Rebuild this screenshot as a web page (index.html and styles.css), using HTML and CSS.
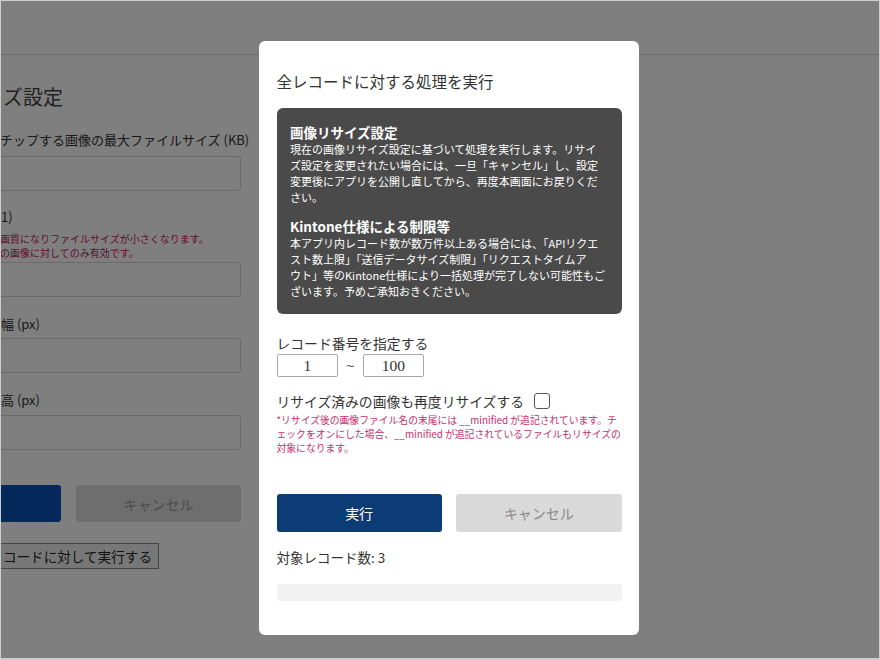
FILE: index.html
```html
<!DOCTYPE html>
<html lang="ja">
<head>
<meta charset="utf-8">
<title>全レコードに対する処理を実行</title>
<link rel="stylesheet" href="styles.css">
</head>
<body>
<div class="frame">
  <div class="page">
    <header class="page-header"></header>
    <main class="form-col">
      <h1 class="bg-title txt">ズ設定</h1>
      <div class="bg-label txt lbl1">チップする画像の最大ファイルサイズ (KB)</div>
      <div class="bg-input in1"></div>
      <div class="bg-label txt lbl2">1)</div>
      <div class="bg-note txt">画質になりファイルサイズが小さくなります。<br>の画像に対してのみ有効です。</div>
      <div class="bg-input in2"></div>
      <div class="bg-label txt lbl3">幅 (px)</div>
      <div class="bg-input in3"></div>
      <div class="bg-label txt lbl3">高 (px)</div>
      <div class="bg-input in4"></div>
      <div class="bg-buttons">
        <div class="bg-btn bg-primary"></div>
        <div class="bg-btn bg-cancel">キャンセル</div>
      </div>
      <div class="bg-run"><span>コードに対して実行する</span></div>
    </main>
  </div>

  <div class="overlay">
    <section class="modal">
      <h2 class="modal-title">全レコードに対する処理を実行</h2>
      <div class="info">
        <h3 class="info-head">画像リサイズ設定</h3>
        <p class="info-body">現在の画像リサイズ設定に基づいて処理を実行します。リサイ<br>ズ設定を変更されたい場合には、一旦「キャンセル」し、設定<br>変更後にアプリを公開し直してから、再度本画面にお戻りくだ<br>さい。</p>
        <h3 class="info-head second">Kintone仕様による制限等</h3>
        <p class="info-body">本アプリ内レコード数が数万件以上ある場合には、「APIリクエ<br>スト数上限」「送信データサイズ制限」「リクエストタイムア<br>ウト」等のKintone仕様により一括処理が完了しない可能性もご<br>ざいます。予めご承知おきください。</p>
      </div>
      <div class="field-label">レコード番号を指定する</div>
      <div class="range">
        <input class="num" type="text" value="1">
        <span class="tilde">~</span>
        <input class="num" type="text" value="100">
      </div>
      <label class="check-row">リサイズ済みの画像も再度リサイズする<input class="check" type="checkbox"></label>
      <p class="note">*リサイズ後の画像ファイル名の末尾には __minified が追記されています。チ<br>ェックをオンにした場合、__minified が追記されているファイルもリサイズの<br>対象になります。</p>
      <div class="actions">
        <button class="btn btn-primary" type="button">実行</button>
        <button class="btn btn-cancel" type="button">キャンセル</button>
      </div>
      <div class="count">対象レコード数:&nbsp;3</div>
      <div class="progress"></div>
    </section>
  </div>
</div>
</body>
</html>
```

FILE: styles.css
```css
* { box-sizing: border-box; }
html, body { margin: 0; padding: 0; }
body {
  font-family: "Noto Sans CJK JP", "Noto Sans", sans-serif;
  color: #333;
  background: #fff;
}
.frame {
  width: 880px;
  height: 660px;
  border: 1px solid #cdcdcd;
  border-bottom-width: 2px;
  position: relative;
  overflow: hidden;
  background: #fff;
}
.page {
  width: 100%;
  height: 100%;
  background: #fff;
}
.page-header {
  height: 54px;
  border-bottom: 1px solid #d8d8d8;
}
.form-col {
  width: 300px;
  margin-left: -60px;
}
.txt { padding-left: 60px; white-space: nowrap; }
.bg-title {
  margin: 28px 0 0;
  font-size: 20px;
  line-height: 28px;
  font-weight: normal;
  color: #444;
  padding-left: 62px;
}
.bg-label {
  font-size: 13px;
  line-height: 20px;
  color: #333;
}
.lbl1 { margin-top: 19px; padding-left: 59px; }
.lbl2 { margin-top: 16px; }
.lbl3 { margin-top: 17px; padding-left: 60px; }
.bg-note {
  margin-top: 5px;
  font-size: 10px;
  line-height: 14px;
  color: #c2185b;
  padding-left: 59px;
}
.bg-input {
  height: 35px;
  border: 1px solid #d4d4d4;
  border-radius: 3px;
  background: #fff;
}
.in1 { margin-top: 6px; }
.in2 { margin-top: 2px; }
.in3 { margin-top: 4px; }
.in4 { margin-top: 5px; }
.bg-buttons {
  margin-top: 35px;
  display: grid;
  grid-template-columns: 1fr 165px;
  gap: 15px;
}
.bg-btn {
  height: 37px;
  border-radius: 3px;
  display: flex;
  align-items: center;
  justify-content: center;
  font-size: 14px;
}
.bg-primary { background: #0b53b4; }
.bg-cancel { background: #dcdcdc; color: #999; }
.bg-run {
  margin-top: 21px;
  width: 218px;
  height: 26px;
  border: 1px solid #8a8a8a;
  background: #efefef;
  font-size: 13.6px;
  line-height: 24px;
  text-align: right;
  padding-right: 6px;
  color: #222;
  white-space: nowrap;
}

.overlay {
  position: absolute;
  inset: 0;
  background: rgba(0, 0, 0, 0.5);
  display: flex;
  align-items: flex-start;
  padding: 40px 0 0 258px;
}
.modal {
  width: 380px;
  background: #fff;
  border-radius: 6px;
  padding: 29px 17.5px 34px;
}
.modal-title {
  margin: 0;
  font-size: 15.5px;
  line-height: 22px;
  font-weight: normal;
  color: #333;
  white-space: nowrap;
}
.info {
  margin-top: 16px;
  background: #4a4a4a;
  border-radius: 6px;
  padding: 15px 10px 15px 13.5px;
  color: #fff;
}
.info-head {
  margin: 0;
  font-size: 13.5px;
  line-height: 18px;
  font-weight: bold;
  white-space: nowrap;
}
.info-head.second { margin-top: 12px; }
.info-body {
  margin: 0;
  font-size: 11px;
  line-height: 16px;
  white-space: nowrap;
}
.field-label {
  margin-top: 19px;
  font-size: 13.8px;
  line-height: 20px;
  white-space: nowrap;
}
.range {
  margin-top: 1px;
  display: flex;
  align-items: center;
}
.num {
  width: 61.5px;
  height: 23px;
  border: 1px solid #a8a8a8;
  border-radius: 2px;
  padding: 0;
  font-family: "Liberation Serif", serif;
  font-size: 15.5px;
  color: #333;
  text-align: center;
  background: #fff;
  outline: none;
}
.tilde {
  width: 24.5px;
  text-align: center;
  font-family: "Liberation Sans", sans-serif;
  font-size: 14px;
  color: #555;
}
.check-row {
  margin-top: 14px;
  display: flex;
  align-items: center;
  font-size: 13.8px;
  line-height: 20px;
  white-space: nowrap;
}
.check {
  appearance: none;
  -webkit-appearance: none;
  margin: 0 0 0 10px;
  width: 16px;
  height: 16px;
  border: 1.5px solid #555;
  border-radius: 3px;
  background: #fff;
}
.note {
  margin: 2px 0 0;
  font-size: 9.8px;
  line-height: 14px;
  color: #c2306e;
  white-space: nowrap;
}
.actions {
  margin-top: 39px;
  display: grid;
  grid-template-columns: 1fr 1fr;
  gap: 14.5px;
}
.btn {
  height: 38px;
  border: none;
  border-radius: 3px;
  font-family: inherit;
  font-size: 14px;
  padding: 0;
}
.btn-primary { background: #0d3b75; color: #fff; }
.btn-cancel { background: #d9d9d9; color: #8a8a8a; }
.count {
  margin-top: 15px;
  font-size: 13.5px;
  line-height: 20px;
  color: #333;
}
.progress {
  margin-top: 17px;
  height: 17px;
  background: #f2f2f2;
  border-radius: 3px;
}
```
